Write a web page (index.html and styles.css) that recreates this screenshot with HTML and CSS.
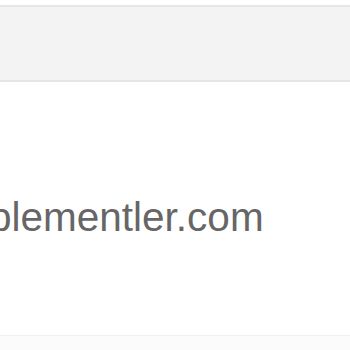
FILE: index.html
```html
<!DOCTYPE html>
<html>
<head>
<meta charset="utf-8">
<link rel="stylesheet" href="styles.css">
</head>
<body>
<div class="page">
  <div class="topbar"></div>
  <div class="content">
    <div class="site">plementler.com</div>
  </div>
  <div class="footer"></div>
</div>
</body>
</html>
```
FILE: styles.css
```css
html, body {
  margin: 0;
  padding: 0;
  background: #ffffff;
  overflow: hidden;
}
.page {
  width: 350px;
  height: 350px;
  display: flex;
  flex-direction: column;
  padding-top: 5px;
  box-sizing: border-box;
}
.topbar {
  height: 73px;
  background: #f3f3f3;
  border-top: 2px solid #e6e6e6;
  border-bottom: 2px solid #e6e6e6;
}
.content {
  height: 253px;
  display: flex;
  align-items: flex-start;
  padding-top: 111px;
  box-sizing: border-box;
}
.site {
  font-family: "Liberation Sans", Arial, sans-serif;
  font-size: 40.5px;
  line-height: 48px;
  color: #666666;
  margin-left: -11px;
  white-space: nowrap;
}
.footer {
  flex: 1;
  background: #fbfbfb;
  border-top: 1px solid #f0f0f0;
}
```
